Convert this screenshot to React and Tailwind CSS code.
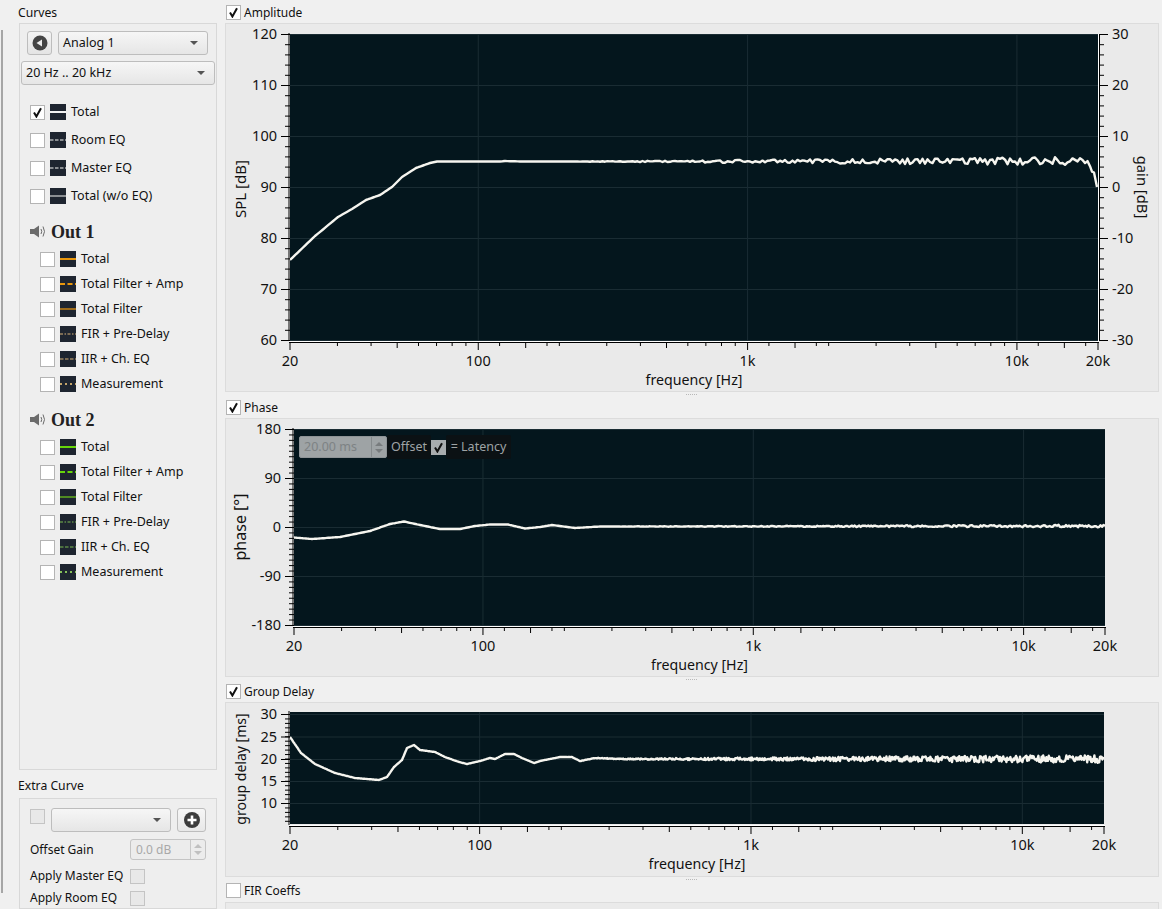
import React from 'react';

const FONT = '"Noto Sans", "Liberation Sans", sans-serif';

// seeded noise so the curves come out the same on every load
const noise = (i) => {
  const v = Math.sin(i * 12.9898) * 43758.5453;
  return (v - Math.floor(v)) * 2 - 1;
};

const buildPath = (points, noiseFrom, noiseAmp, step = 2.5) => {
  const pts = [];
  for (let s = 0; s < points.length - 1; s++) {
    const [x0, y0] = points[s];
    const [x1, y1] = points[s + 1];
    const n = Math.max(1, Math.round((x1 - x0) / step));
    for (let k = 0; k < n; k++) {
      const x = x0 + ((x1 - x0) * k) / n;
      const y = y0 + ((y1 - y0) * k) / n;
      let d = 0;
      if (x > noiseFrom) {
        const t = (x - noiseFrom) / (points[points.length - 1][0] - noiseFrom);
        d = noise(Math.round(x * 3)) * noiseAmp * t;
      }
      pts.push([x, y + d]);
    }
  }
  pts.push(points[points.length - 1]);
  return 'M' + pts.map((p) => `${p[0].toFixed(1)} ${p[1].toFixed(1)}`).join('L');
};

const freqTicks = [
  [20, 2], [30, 0], [40, 0], [50, 1], [60, 0], [70, 0], [80, 0], [90, 0], [100, 2],
  [120, 0], [150, 1], [180, 0], [200, 0], [300, 0], [400, 0], [500, 1], [600, 0], [700, 0], [800, 0], [900, 0], [1000, 2],
  [1200, 0], [1500, 1], [1800, 0], [2000, 0], [3000, 0], [4000, 0], [5000, 1], [6000, 0], [7000, 0], [8000, 0], [9000, 0], [10000, 2],
  [12000, 0], [15000, 1], [18000, 0], [20000, 2],
];

const freqLabels = [[20, '20'], [100, '100'], [1000, '1k'], [10000, '10k'], [20000, '20k']];

function Chart({ box, plot, yTicks, yMinor, yLabel, yLabelY, yLabelSize = 15, right, curve, curveWidth = 2.4 }) {
  const fx = (f) => plot.x0 + ((plot.x1 - plot.x0) * Math.log(f / 20)) / Math.log(1000);
  const axisY = plot.y1 + 2;
  return (
    <svg
      className="block"
      width={box.w}
      height={box.h}
      viewBox={`${box.x} ${box.y} ${box.w} ${box.h}`}
      style={{ fontFamily: FONT }}
    >
      <defs>
        <clipPath id={`clip-${plot.y0}`}>
          <rect x={plot.x0} y={plot.y0} width={plot.x1 - plot.x0} height={plot.y1 - plot.y0} />
        </clipPath>
      </defs>
      <rect x={plot.x0} y={plot.y0} width={plot.x1 - plot.x0} height={plot.y1 - plot.y0} fill="#04161d" />
      <line x1={plot.x0 - 1} x2={plot.x0 - 1} y1={plot.y0 - 1} y2={plot.y1 + 1} stroke="#000" />

      {yTicks.map(([y]) => (
        <line key={y} x1={plot.x0} x2={plot.x1} y1={y + 0.5} y2={y + 0.5} stroke="#1a2c33" />
      ))}
      {[100, 1000, 10000].map((f) => (
        <line key={f} x1={fx(f)} x2={fx(f)} y1={plot.y0} y2={plot.y1} stroke="#1a2c33" />
      ))}

      {/* left axis */}
      {yMinor.map((y) => (
        <line key={y} x1={plot.x0 - 5} x2={plot.x0} y1={y + 0.5} y2={y + 0.5} stroke="#000" />
      ))}
      {yTicks.map(([y, label]) => (
        <g key={label}>
          <line x1={plot.x0 - 9} x2={plot.x0} y1={y + 0.5} y2={y + 0.5} stroke="#000" />
          <text x={plot.x0 - 13} y={y + 5} textAnchor="end" fontSize="14.5" fill="#111">
            {label}
          </text>
        </g>
      ))}

      {/* bottom axis */}
      <line x1={plot.x0 - 1} x2={plot.x1 + 1} y1={axisY + 0.5} y2={axisY + 0.5} stroke="#000" />
      <line x1={plot.x0 - 1} x2={plot.x1 + 1} y1={axisY - 0.5} y2={axisY - 0.5} stroke="#fff" />
      {freqTicks.map(([f, level]) => (
        <line key={f} x1={fx(f)} x2={fx(f)} y1={axisY + 1} y2={axisY + 1 + [3, 5, 7][level]} stroke="#000" />
      ))}
      {freqLabels.map(([f, label]) => (
        <text key={f} x={fx(f)} y={axisY + 24} textAnchor="middle" fontSize="14.5" fill="#111">
          {label}
        </text>
      ))}
      <text x={(plot.x0 + plot.x1) / 2} y={axisY + 43} textAnchor="middle" fontSize="14.2" fill="#111">
        frequency [Hz]
      </text>

      <text
        x={240}
        y={yLabelY}
        textAnchor="middle"
        fontSize={yLabelSize}
        fill="#111"
        transform={`rotate(-90 240 ${yLabelY})`}
        dominantBaseline="central"
      >
        {yLabel}
      </text>

      {right && (
        <g>
          <line x1={plot.x1 + 0.5} x2={plot.x1 + 0.5} y1={plot.y0} y2={plot.y1 + 1} stroke="#fff" />
          <line x1={plot.x1 + 1.5} x2={plot.x1 + 1.5} y1={plot.y0} y2={plot.y1 + 1} stroke="#000" />
          {right.minor.map((y) => (
            <line key={y} x1={plot.x1 + 1} x2={plot.x1 + 6} y1={y + 0.5} y2={y + 0.5} stroke="#000" />
          ))}
          {right.ticks.map(([y, label]) => (
            <g key={label}>
              <line x1={plot.x1 + 1} x2={plot.x1 + 10} y1={y + 0.5} y2={y + 0.5} stroke="#000" />
              <text x={plot.x1 + 14} y={y + 5} fontSize="14.5" fill="#111">
                {label}
              </text>
            </g>
          ))}
          <text
            x={1143}
            y={187}
            textAnchor="middle"
            fontSize="14.8"
            fill="#111"
            transform="rotate(90 1143 187)"
            dominantBaseline="central"
          >
            {right.label}
          </text>
        </g>
      )}

      <path
        d={curve}
        fill="none"
        stroke="#f6f5ef"
        strokeWidth={curveWidth}
        strokeLinejoin="round"
        clipPath={`url(#clip-${plot.y0})`}
      />
    </svg>
  );
}

const range = (start, end, step) => {
  const out = [];
  for (let v = start; v <= end + 0.01; v += step) out.push(v);
  return out;
};

const ampCurve = buildPath(
  [[290, 260], [315, 236], [338, 217], [352, 209], [366, 200], [380, 195], [392, 187], [402, 177], [416, 168], [430, 163], [437, 161.5], [500, 161.5], [505, 161], [520, 161.5], [700, 161.5], [1000, 161], [1080, 161], [1090, 165], [1094, 172], [1097, 187]],
  560, 4.4
);
const phaseCurve = buildPath(
  [[294, 537.5], [312, 539], [340, 537], [370, 531], [390, 524], [404, 521.5], [420, 525], [440, 529], [460, 529], [475, 526], [490, 524.5], [508, 524.5], [525, 528.5], [540, 527], [552, 525], [575, 528], [600, 526.5], [1105, 526]],
  580, 1.4, 1.5
);
const delayCurve = buildPath(
  [[290, 737], [301, 753], [315, 764], [335, 773], [355, 778], [379, 780], [387, 777], [394, 767], [402, 760], [407, 748], [414, 745], [420, 750], [435, 752], [445, 757], [459, 762], [467, 764], [480, 761], [490, 758], [495, 759], [505, 754], [514, 754], [522, 758], [534, 763], [540, 761], [560, 757], [572, 757], [580, 761], [595, 758], [620, 759], [1104, 759]],
  560, 4.2, 0.8
);

function Check({ checked, disabled, className = '' }) {
  return (
    <span
      className={`flex h-[15px] w-[15px] shrink-0 items-center justify-center border ${
        disabled ? 'border-[#c4c4c4] bg-[#e8e8e8]' : 'border-[#b4b4b4] bg-white'
      } ${className}`}
    >
      {checked && (
        <svg width="11" height="11" viewBox="0 0 11 11">
          <path d="M2 5.5 L4.4 9.5 L9 1.2" fill="none" stroke="#111" strokeWidth="2" />
        </svg>
      )}
    </span>
  );
}

function Arrow() {
  return <span className="h-0 w-0 border-x-[4px] border-t-[4px] border-x-transparent border-t-[#555]" />;
}

function Select({ label, className = '' }) {
  return (
    <div
      className={`flex h-[24px] items-center justify-between rounded-[3px] border border-[#bdbdbd] bg-gradient-to-b from-[#f6f6f6] to-[#e6e6e6] pl-[4px] pr-[9px] text-[12.5px] text-[#111] ${className}`}
    >
      <span>{label}</span>
      <Arrow />
    </div>
  );
}

function LineIcon({ color, dash }) {
  return (
    <svg width="16" height="16" viewBox="0 0 16 16" className="shrink-0">
      <rect width="16" height="16" fill="#1e2530" />
      <line x1="0" x2="16" y1="8" y2="8" stroke={color} strokeWidth="2" strokeDasharray={dash} />
    </svg>
  );
}

function CurveRow({ label, color, dash, checked }) {
  return (
    <div className="flex items-center">
      <Check checked={checked} />
      <span className="ml-[5px]">
        <LineIcon color={color} dash={dash} />
      </span>
      <span className="ml-[5px] text-[12.5px] leading-none text-[#111]">{label}</span>
    </div>
  );
}

function Speaker() {
  return (
    <svg width="17" height="14" viewBox="0 0 17 14" className="shrink-0">
      <path d="M0 4 H4 L9 0.5 V12.5 L4 9 H0 Z" fill="#6b6b6b" />
      <path d="M11 4 Q12.5 6.5 11 9" fill="none" stroke="#6b6b6b" strokeWidth="1" />
      <path d="M13 1.5 Q16 6.5 13 11.5" fill="none" stroke="#6b6b6b" strokeWidth="1" />
    </svg>
  );
}

function OutBlock({ name, rows, className }) {
  return (
    <div className={className}>
      <div className="flex h-[20px] items-center">
        <Speaker />
        <span className="ml-[4px] font-['Liberation_Serif'] text-[18px] leading-none font-bold text-[#222]">{name}</span>
      </div>
      <div className="mt-[9px] flex flex-col gap-[9px] pl-[10px]">
        {rows.map((r) => (
          <CurveRow key={r.label} {...r} />
        ))}
      </div>
    </div>
  );
}

const outRows = (solid, dim, faint, dots) => [
  { label: 'Total', color: solid },
  { label: 'Total Filter + Amp', color: solid, dash: '5 2.5' },
  { label: 'Total Filter', color: dim },
  { label: 'FIR + Pre-Delay', color: faint, dash: '3 1.5 1.5 1.5' },
  { label: 'IIR + Ch. EQ', color: faint, dash: '3.5 1.5' },
  { label: 'Measurement', color: dots, dash: '2 3' },
];

function Sidebar() {
  return (
    <div className="ml-[15px] flex h-full w-[199px] shrink-0 flex-col">
      <div className="h-[23px] pt-[5px] text-[12.2px] leading-[16px] text-[#111]">Curves</div>
      <div className="ml-[1px] h-[747px] border border-[#d8d8d8] bg-[#eeeeee] px-[1px] pt-[7px]">
        <div className="flex gap-[6px] pl-[6px] pr-[7px]">
          <div className="flex h-[24px] w-[25px] items-center justify-center rounded-[3px] border border-[#bdbdbd] bg-gradient-to-b from-[#f4f4f4] to-[#e4e4e4]">
            <svg width="16" height="16" viewBox="0 0 16 16">
              <circle cx="8" cy="8" r="7.5" fill="#454545" />
              <path d="M4.5 8 L10 4.5 V11.5 Z" fill="#eee" />
            </svg>
          </div>
          <Select label="Analog 1" className="flex-1" />
        </div>
        <Select label="20 Hz .. 20 kHz" className="mt-[6px]" />
        <div className="flex flex-col gap-[12px] pl-[9px] pt-[19px]">
          <CurveRow label="Total" color="#f2f2f2" checked />
          <CurveRow label="Room EQ" color="#8a8e92" dash="3.5 1.5" />
          <CurveRow label="Master EQ" color="#8a8e92" dash="3.5 1.5" />
          <CurveRow label="Total (w/o EQ)" color="#8a8e92" />
        </div>
        <OutBlock name="Out 1" className="mt-[18px] pl-[9px]" rows={outRows('#e8960c', '#9c6a1a', '#7c6c54', '#c4a46a')} />
        <OutBlock name="Out 2" className="mt-[18px] pl-[9px]" rows={outRows('#66d60a', '#4f8a22', '#4c7040', '#86c05a')} />
      </div>
      <div className="h-[28px] pt-[8px] text-[12.2px] leading-[16px] text-[#111]">Extra Curve</div>
      <div className="ml-[1px] flex-1 border border-[#d8d8d8] bg-[#eeeeee] pl-[10px] pt-[9px] text-[12px] leading-none text-[#111]">
        <div className="flex items-start">
          <Check disabled className="mt-[1px]" />
          <Select label="" className="ml-[6px] w-[120px]" />
          <div className="ml-[6px] flex h-[24px] w-[29px] items-center justify-center rounded-[3px] border border-[#bdbdbd] bg-gradient-to-b from-[#f6f6f6] to-[#e8e8e8]">
            <svg width="16" height="16" viewBox="0 0 16 16">
              <circle cx="8" cy="8" r="8" fill="#3c3c3c" />
              <path d="M8 3.5 V12.5 M3.5 8 H12.5" stroke="#fff" strokeWidth="2.6" />
            </svg>
          </div>
        </div>
        <div className="mt-[7px] flex h-[21px] items-center">
          <span className="w-[100px]">Offset Gain</span>
          <div className="flex h-[21px] w-[76px] items-center justify-between rounded-[3px] border border-[#c4c4c4] bg-[#ececec] pl-[5px] text-[#a8a8a8]">
            <span>0.0 dB</span>
            <span className="flex h-full w-[15px] flex-col items-center justify-center gap-[3px] border-l border-[#c8c8c8]">
              <span className="h-0 w-0 border-x-[4px] border-b-[4px] border-x-transparent border-b-[#c0c0c0]" />
              <span className="h-0 w-0 border-x-[4px] border-t-[4px] border-x-transparent border-t-[#c0c0c0]" />
            </span>
          </div>
        </div>
        <div className="mt-[8px] flex h-[16px] items-center">
          <span className="w-[100px]">Apply Master EQ</span>
          <Check disabled />
        </div>
        <div className="mt-[6px] flex h-[16px] items-center">
          <span className="w-[100px]">Apply Room EQ</span>
          <Check disabled />
        </div>
      </div>
    </div>
  );
}

function SectionHead({ label, checked, className }) {
  return (
    <div className={`flex h-[15px] items-center pl-[1px] ${className}`}>
      <Check checked={checked} />
      <span className="ml-[3px] pt-[1px] text-[12px] leading-none text-[#111]">{label}</span>
    </div>
  );
}

function Handle() {
  return (
    <div className="absolute bottom-[-4px] left-[460px] flex gap-[1px]">
      {[0, 1, 2, 3, 4, 5].map((i) => (
        <span key={i} className="h-[1px] w-[1px] bg-[#b8b8b8]" />
      ))}
    </div>
  );
}

function Panel({ height, children }) {
  return (
    <div className="relative w-[934px] border border-[#dcdcdc] bg-[#eaeaea]" style={{ height }}>
      {children}
      <Handle />
    </div>
  );
}

export default function App() {
  return (
    <div
      className="flex h-[909px] w-[1162px] overflow-hidden bg-[#f0f0f0]"
      style={{ fontFamily: FONT }}
    >
      <div className="ml-[1px] mt-[30px] h-[863px] w-[2px] shrink-0 bg-[#a6a6a6]" />
      <Sidebar />
      <div className="ml-[8px] flex-1">
        <SectionHead label="Amplitude" checked className="mt-[5px] mb-[3px]" />
        <Panel height={369}>
          <Chart
            box={{ x: 226, y: 24, w: 932, h: 367 }}
            plot={{ x0: 290, x1: 1098, y0: 34, y1: 340 }}
            yTicks={[[34, '120'], [85, '110'], [136, '100'], [187, '90'], [238, '80'], [289, '70'], [340, '60']]}
            yMinor={range(34, 340, 10.2)}
            yLabel="SPL [dB]"
            yLabelY={189}
            right={{
              label: 'gain [dB]',
              ticks: [[34, '30'], [85, '20'], [136, '10'], [187, '0'], [238, '-10'], [289, '-20'], [340, '-30']],
              minor: range(34, 340, 10.2),
            }}
            curve={ampCurve}
          />
        </Panel>
        <SectionHead label="Phase" checked className="mt-[8px] mb-[3px]" />
        <Panel height={259}>
          <Chart
            box={{ x: 226, y: 419, w: 932, h: 257 }}
            plot={{ x0: 294, x1: 1105, y0: 429, y1: 625 }}
            yTicks={[[429, '180'], [478, '90'], [527, '0'], [576, '-90'], [625, '-180']]}
            yMinor={range(429, 625, 5.444)}
            yLabel="phase [°]"
            yLabelY={527}
            yLabelSize={16}
            curve={phaseCurve}
          />
          <div className="absolute left-[73px] top-[16px] flex items-center text-[12.5px] leading-none">
            <div className="flex h-[22px] w-[88px] items-center justify-between rounded-[2px] border border-[#8e9396] bg-[#9ea3a5] pl-[4px] text-[#7d8284]">
              <span>20.00 ms</span>
              <span className="flex h-full w-[15px] flex-col items-center justify-center gap-[3px] border-l border-[#858a8c]">
                <span className="h-0 w-0 border-x-[4px] border-b-[4px] border-x-transparent border-b-[#787c7e]" />
                <span className="h-0 w-0 border-x-[4px] border-t-[4px] border-x-transparent border-t-[#787c7e]" />
              </span>
            </div>
            <span className="flex h-[24px] w-[44px] items-center justify-center rounded-[2px] bg-[#0b1114] text-[#9ea3a5]">Offset</span>
            <span className="flex h-[15px] w-[15px] items-center justify-center bg-[#a8acae]">
              <svg width="11" height="11" viewBox="0 0 11 11">
                <path d="M2 5.5 L4.4 9.5 L9 1.2" fill="none" stroke="#111" strokeWidth="2" />
              </svg>
            </span>
            <span className="flex h-[24px] w-[65px] items-center justify-center rounded-[2px] bg-[#0b1114] text-[#9ea3a5]">= Latency</span>
          </div>
        </Panel>
        <SectionHead label="Group Delay" checked className="mt-[7px] mb-[3px]" />
        <Panel height={175}>
          <Chart
            box={{ x: 226, y: 703, w: 932, h: 173 }}
            plot={{ x0: 290, x1: 1104, y0: 712, y1: 824 }}
            yTicks={[[714, '30'], [736.5, '25'], [759, '20'], [781, '15'], [803, '10']]}
            yMinor={range(714, 824, 4.45)}
            yLabel="group delay [ms]"
            yLabelY={769}
            yLabelSize={14}
            curve={delayCurve}
          />
        </Panel>
        <SectionHead label="FIR Coeffs" className="mt-[6px] mb-[4px]" />
        <div className="h-[20px] w-[934px] border border-[#dcdcdc] bg-[#eaeaea]" />
      </div>
    </div>
  );
}
